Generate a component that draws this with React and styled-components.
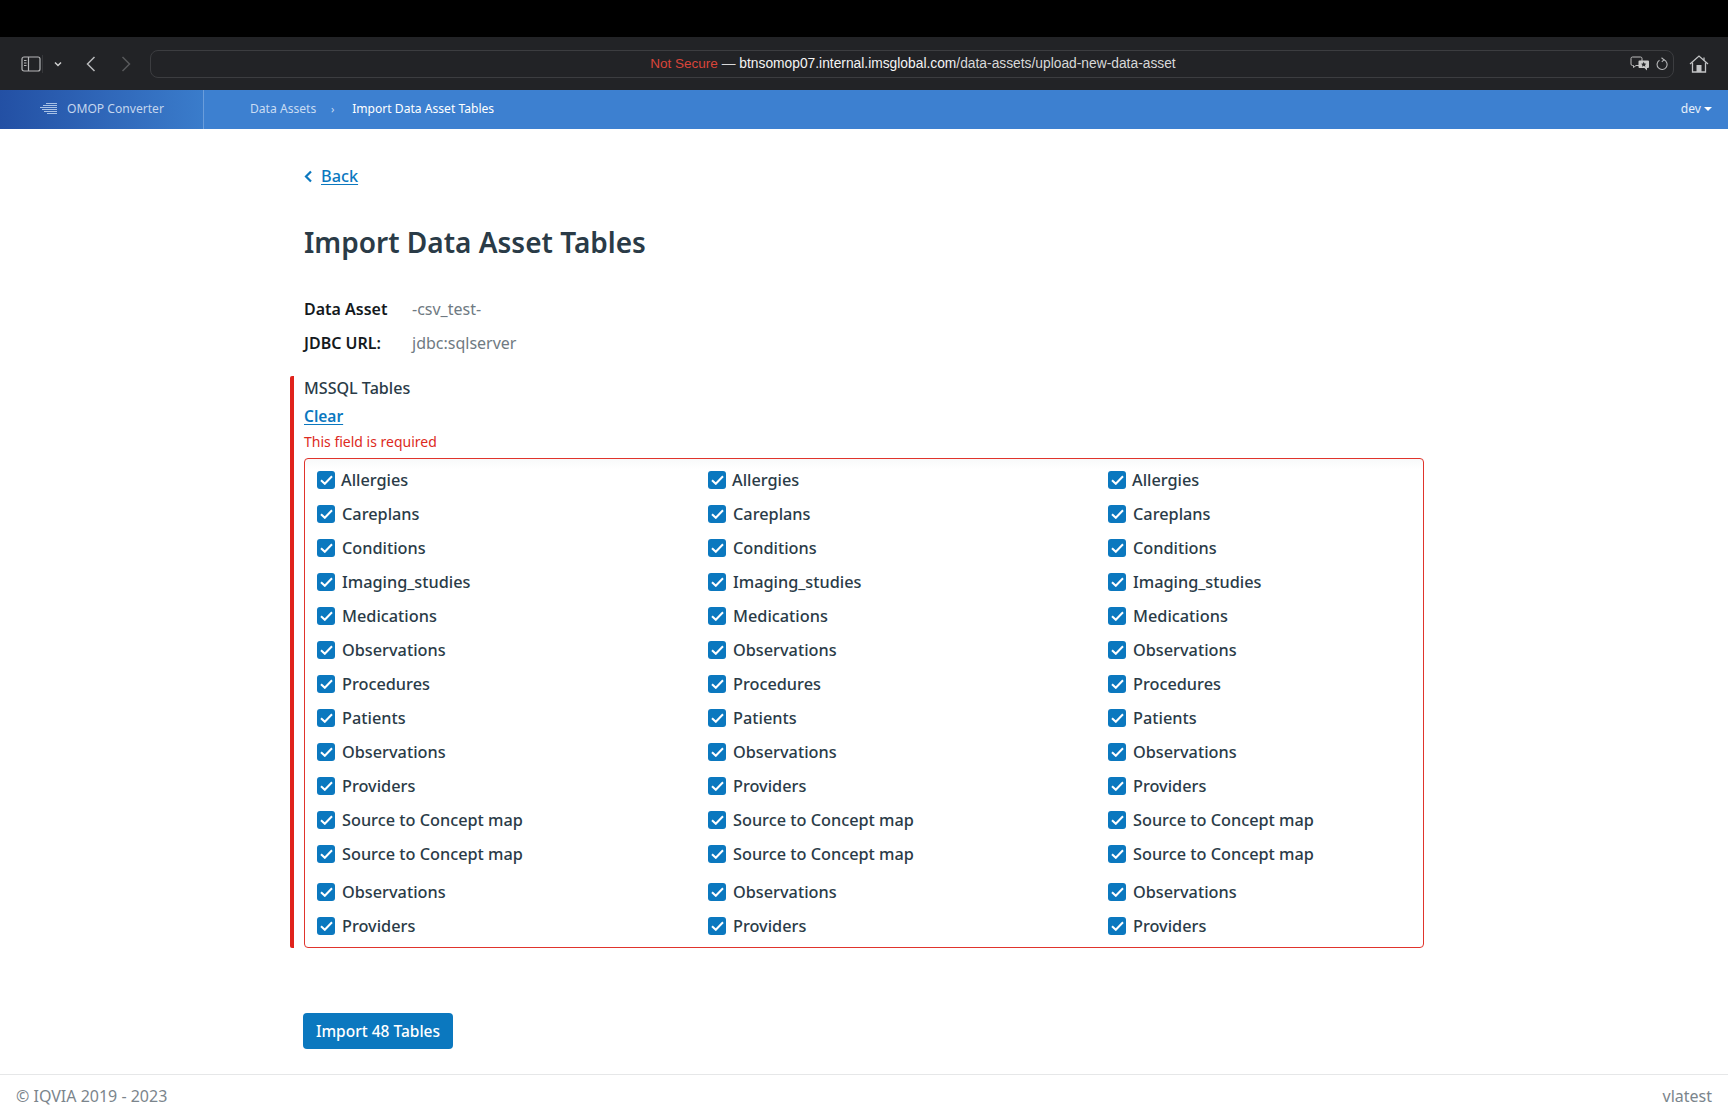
import React from 'react';
import styled, { createGlobalStyle } from 'styled-components';

const GlobalStyle = createGlobalStyle`
  html, body { margin: 0; padding: 0; background: #fff; }
  body { font-family: 'Noto Sans', sans-serif; color: #2a3b47; }
  * { box-sizing: border-box; }
`;

const Page = styled.div`
  width: 1728px;
  height: 1117px;
  overflow: hidden;
  display: flex;
  flex-direction: column;
`;

const TopBlack = styled.div`
  height: 37px;
  background: #000;
`;

const Toolbar = styled.div`
  height: 53px;
  background: #222326;
  display: flex;
  align-items: center;
  padding-left: 21px;
`;

const ToolIcon = styled.svg`
  display: block;
  flex: none;
  margin-left: ${p => p.$ml || 0}px;
`;

const ToolDivider = styled.span`
  width: 1px;
  height: 18px;
  margin-left: 1px;
  background: #36373a;
  flex: none;
`;

const AddressBar = styled.div`
  margin-left: 19px;
  width: 1524px;
  height: 28px;
  border: 1px solid #3c3d40;
  border-radius: 8px;
  display: flex;
  align-items: center;
  justify-content: flex-end;
  padding-right: 5px;
  position: relative;
`;

const AddressText = styled.div`
  position: absolute;
  left: 0;
  right: 0;
  top: 4px;
  padding-left: 2px;
  text-align: center;
  font-family: 'Liberation Sans', Arial, sans-serif;
  font-size: 13.8px;
  line-height: 17px;
  color: #d8d8d8;
  white-space: nowrap;
`;

const NotSecure = styled.span`
  color: #d9453a;
  font-size: 13.5px;
`;

const Host = styled.span`
  color: #f4f4f4;
`;

const NavBar = styled.div`
  height: 39px;
  background: #3d80d0;
  display: flex;
  align-items: center;
  padding-bottom: 2px;
  font-size: 12.1px;
  color: #fff;
`;

const Brand = styled.div`
  width: 204px;
  height: 39px;
  margin-bottom: -2px;
  display: flex;
  align-items: center;
  padding: 0 0 2px 40px;
  gap: 10px;
  color: #c4d6ee;
  background: linear-gradient(90deg, #2350a4 0%, #2f66b8 50%, #3a7ccb 100%);
  border-right: 1px solid #6a9ddb;
`;

const Crumbs = styled.div`
  display: flex;
  align-items: center;
  flex: 1;
  padding-left: 46px;
`;

const Crumb = styled.span`
  color: ${p => (p.$active ? '#fff' : '#c9dcf3')};
`;

const CrumbSep = styled.span`
  color: #c9dcf3;
  width: 36px;
  padding-right: 3px;
  text-align: center;
  font-size: 11px;
`;

const EnvMenu = styled.div`
  display: flex;
  align-items: center;
  gap: 3px;
  padding-right: 16px;
  color: #e6effa;
`;

const Caret = styled.span`
  width: 0;
  height: 0;
  border-left: 4px solid transparent;
  border-right: 4px solid transparent;
  border-top: 4.5px solid #fff;
`;

const Main = styled.main`
  flex: 1;
  padding: 34px 0 0 291px;
  display: flex;
  flex-direction: column;
`;

const BackRow = styled.div`
  display: flex;
  align-items: center;
  height: 26px;
  padding-left: 13px;
  gap: 8px;
`;

const LinkText = styled.a`
  color: #0b78bf;
  font-size: ${p => p.$size || 16.3}px;
  font-weight: ${p => p.$weight || 500};
  text-decoration: underline;
  text-underline-offset: 2px;
  line-height: 22px;
`;

const Title = styled.h1`
  margin: 33px 0 0 13px;
  font-size: 28px;
  line-height: 40px;
  font-weight: 600;
  color: #2a3b47;
`;

const MetaList = styled.div`
  margin: 36px 0 0 13px;
  display: flex;
  flex-direction: column;
  gap: 12px;
`;

const MetaRow = styled.div`
  display: flex;
  align-items: center;
  height: 22px;
  font-size: 16px;
`;

const MetaLabel = styled.div`
  width: 108px;
  font-weight: 600;
  color: #14191d;
`;

const MetaValue = styled.div`
  color: #6f7a82;
`;

const FieldSet = styled.section`
  margin: 22px 0 0 -1px;
  width: 1134px;
  height: 572px;
  border-left: 4px solid #e0231c;
  border-radius: 2px;
  padding-left: 10px;
  display: flex;
  flex-direction: column;
`;

const FieldLabel = styled.div`
  height: 24px;
  font-size: 16.1px;
  line-height: 24px;
  font-weight: 500;
  color: #2a3b47;
`;

const ClearRow = styled.div`
  height: 24px;
  margin-top: 4px;
  line-height: 24px;
`;

const ErrorText = styled.div`
  height: 20px;
  margin-top: 4px;
  font-size: 14px;
  line-height: 20px;
  color: #dd2a22;
`;

const OptionsBox = styled.div`
  margin-top: 6px;
  width: 1120px;
  flex: 1;
  border: 1px solid #e0342c;
  border-radius: 4px;
  padding: 4px 0 3px 12px;
  background: linear-gradient(#f8f9fa 0, #fff 10px);
  display: grid;
  grid-template-columns: 391px 400px 1fr;
`;

const Column = styled.div`
  display: flex;
  flex-direction: column;
`;

const Option = styled.label`
  height: 34px;
  margin-top: ${p => (p.$gap ? 4 : 0)}px;
  display: flex;
  align-items: center;
  gap: ${p => (p.$tight ? 6 : 7)}px;
  font-size: 16.3px;
  font-weight: 500;
  color: #2a3b47;
`;

const Check = styled.span`
  width: 18px;
  height: 18px;
  border-radius: 3px;
  background: #0b78bf;
  display: flex;
  align-items: center;
  justify-content: center;
  flex: none;
`;

const ImportButton = styled.button`
  margin: 65px 0 0 12px;
  width: 150px;
  height: 36px;
  border: 0;
  border-radius: 4px;
  background: #0b78bf;
  color: #fff;
  font-family: inherit;
  font-size: 15.5px;
  font-weight: 500;
  padding: 0;
`;

const Footer = styled.footer`
  height: 43px;
  border-top: 1px solid #e6e7e8;
  display: flex;
  align-items: center;
  justify-content: space-between;
  padding: 0 16px;
  font-size: 16px;
  color: #7b858c;
`;

const tableNames = [
  'Allergies', 'Careplans', 'Conditions', 'Imaging_studies', 'Medications', 'Observations', 'Procedures',
  'Patients', 'Observations', 'Providers', 'Source to Concept map', 'Source to Concept map', 'Observations', 'Providers',
];

function CheckMark() {
  return (
    <svg width="13" height="10" viewBox="0 0 13 10" fill="none">
      <path d="M1 5.200 4.800 8.800 12 1.200" stroke="#fff" strokeWidth="2" />
    </svg>
  );
}

function BrowserToolbar() {
  return (
    <Toolbar>
      <ToolIcon width="20" height="16" viewBox="0 0 20 16" fill="none" stroke="#b5b6b8" strokeWidth="1.200">
        <rect x="1" y="1" width="18" height="14" rx="2" />
        <path d="M7.500 1v14" />
        <path d="M3 4.500h2.500M3 7h2.500M3 9.500h2.500" />
      </ToolIcon>
      <ToolDivider />
      <ToolIcon $ml={11} width="8" height="6" viewBox="0 0 8 6" fill="none" stroke="#d0d0d0" strokeWidth="1.500">
        <path d="M1 1.500 4 4.500 7 1.500" />
      </ToolIcon>
      <ToolIcon $ml={24} width="10" height="16" viewBox="0 0 10 16" fill="none" stroke="#b8b9bb" strokeWidth="1.500">
        <path d="M8.500 1 1.500 8l7 7" />
      </ToolIcon>
      <ToolIcon $ml={25} width="10" height="16" viewBox="0 0 10 16" fill="none" stroke="#57585b" strokeWidth="1.500">
        <path d="M1.500 1 8.500 8l-7 7" />
      </ToolIcon>
      <AddressBar>
        <AddressText>
          <NotSecure>Not Secure</NotSecure> — <Host>btnsomop07.internal.imsglobal.com</Host>/data-assets/upload-new-data-asset
        </AddressText>
        <ToolIcon width="20" height="15" viewBox="0 0 20 15" fill="none">
          <path d="M2.500 1h8A1.500 1.500 0 0 1 12 2.500V8a1.500 1.500 0 0 1-1.500 1.500H6L3.500 11.500V9.500h-1A1.500 1.500 0 0 1 1 8V2.500A1.500 1.500 0 0 1 2.500 1Z" stroke="#bdbdbd" strokeWidth="1" />
          <path d="M9.500 4.500h8.500a1 1 0 0 1 1 1V11a1 1 0 0 1-1 1h-1v2.500L14.500 12H9.500a1 1 0 0 1-1-1V5.500a1 1 0 0 1 1-1Z" fill="#c9c9c9" />
          <path d="M13.700 5.800l.8 1.700 1.800.2-1.300 1.200.4 1.800-1.700-.9-1.700.9.400-1.800-1.300-1.200 1.800-.2Z" fill="#2a2b2e" />
        </ToolIcon>
        <ToolIcon $ml={6} width="12" height="14" viewBox="0 0 12 14" fill="none" stroke="#b5b6b8" strokeWidth="1.100">
          <path d="M7.800 2.800A5 5 0 1 1 3.500 3.200" />
          <path d="M5.500 .8 8 2.800 5.800 4.800" />
        </ToolIcon>
      </AddressBar>
      <ToolIcon $ml={15} width="20" height="18" viewBox="0 0 20 18" fill="none" stroke="#c2c3c5" strokeWidth="1.300">
        <path d="M1 9 10 1l9 8" />
        <path d="M3.500 7.500V17h13V7.500" />
        <path d="M15 2.500V5.500" />
        <rect x="7.500" y="10" width="5" height="7" fill="#c2c3c5" stroke="none" />
      </ToolIcon>
    </Toolbar>
  );
}

export default function App() {
  return (
    <Page>
      <GlobalStyle />
      <TopBlack />
      <BrowserToolbar />
      <NavBar>
        <Brand>
          <svg width="17" height="11" viewBox="0 0 17 11" fill="none" stroke="#a9c2e6" strokeWidth="1">
            <path d="M6 .5h11M3 2.500h14M0 4.500h17M2 6.500h15M4 8.500h13M7 10.500h10" />
          </svg>
          OMOP Converter
        </Brand>
        <Crumbs>
          <Crumb>Data Assets</Crumb>
          <CrumbSep>›</CrumbSep>
          <Crumb $active>Import Data Asset Tables</Crumb>
        </Crumbs>
        <EnvMenu>dev <Caret /></EnvMenu>
      </NavBar>
      <Main>
        <BackRow>
          <svg width="9" height="13" viewBox="0 0 9 13" fill="none" stroke="#0b78bf" strokeWidth="2.200">
            <path d="M7 1.500 2 6.500l5 5" />
          </svg>
          <LinkText href="#">Back</LinkText>
        </BackRow>
        <Title>Import Data Asset Tables</Title>
        <MetaList>
          <MetaRow><MetaLabel>Data Asset</MetaLabel><MetaValue>-csv_test-</MetaValue></MetaRow>
          <MetaRow><MetaLabel>JDBC URL:</MetaLabel><MetaValue>jdbc:sqlserver</MetaValue></MetaRow>
        </MetaList>
        <FieldSet>
          <FieldLabel>MSSQL Tables</FieldLabel>
          <ClearRow><LinkText href="#" $size={15.5} $weight={600}>Clear</LinkText></ClearRow>
          <ErrorText>This field is required</ErrorText>
          <OptionsBox>
            {[0, 1, 2].map(col => (
              <Column key={col}>
                {tableNames.map((name, i) => (
                  <Option key={i} $gap={i === 12} $tight={i === 0}>
                    <Check><CheckMark /></Check>
                    {name}
                  </Option>
                ))}
              </Column>
            ))}
          </OptionsBox>
        </FieldSet>
        <ImportButton>Import 48 Tables</ImportButton>
      </Main>
      <Footer>
        <span>© IQVIA 2019 - 2023</span>
        <span>vlatest</span>
      </Footer>
    </Page>
  );
}
